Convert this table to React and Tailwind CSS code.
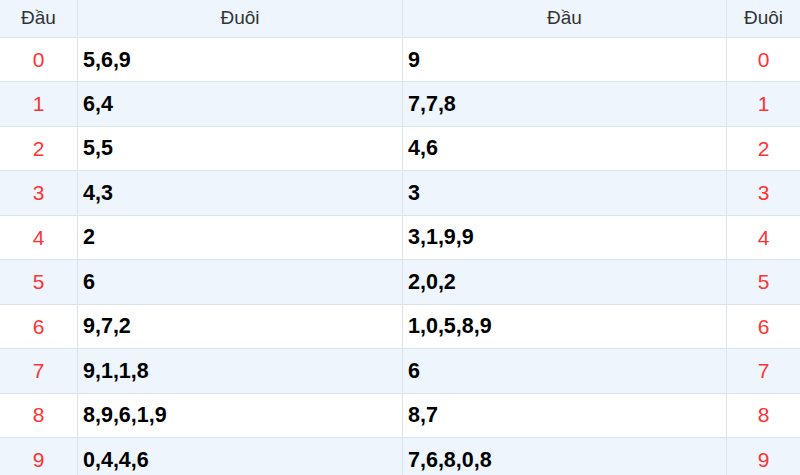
import React from "react";

const rows = [
  { n: 0, tail: "5,6,9", head: "9" },
  { n: 1, tail: "6,4", head: "7,7,8" },
  { n: 2, tail: "5,5", head: "4,6" },
  { n: 3, tail: "4,3", head: "3" },
  { n: 4, tail: "2", head: "3,1,9,9" },
  { n: 5, tail: "6", head: "2,0,2" },
  { n: 6, tail: "9,7,2", head: "1,0,5,8,9" },
  { n: 7, tail: "9,1,1,8", head: "6" },
  { n: 8, tail: "8,9,6,1,9", head: "8,7" },
  { n: 9, tail: "0,4,4,6", head: "7,6,8,0,8" },
];

export default function App() {
  return (
    <div
      className="w-[800px] h-[475px] overflow-hidden bg-white"
      style={{ fontFamily: '"Liberation Sans", Arial, sans-serif' }}
    >
      <div className="flex h-[38px] bg-[#eef5fd] border-b border-[#dde3ea] text-[19px] text-[#333]">
        <div className="w-[78px] border-r border-[#dde3ea] flex items-center justify-center">Đầu</div>
        <div className="w-[325px] border-r border-[#dde3ea] flex items-center justify-center">Đuôi</div>
        <div className="w-[324px] border-r border-[#dde3ea] flex items-center justify-center">Đầu</div>
        <div className="flex-1 flex items-center justify-center">Đuôi</div>
      </div>
      {rows.map((r) => (
        <div
          key={r.n}
          className={`flex h-[44.44px] border-b border-[#dde3ea] ${r.n % 2 ? "bg-[#eef5fd]" : "bg-white"}`}
        >
          <div className="w-[78px] border-r border-[#dde3ea] flex items-center justify-center text-[21px] text-[#ff3333]">
            {r.n}
          </div>
          <div className="w-[325px] border-r border-[#dde3ea] flex items-center pl-[5px] text-[21.5px] font-bold text-black">
            {r.tail}
          </div>
          <div className="w-[324px] border-r border-[#dde3ea] flex items-center pl-[5px] text-[21.5px] font-bold text-black">
            {r.head}
          </div>
          <div className="flex-1 flex items-center justify-center text-[21px] text-[#ff3333]">
            {r.n}
          </div>
        </div>
      ))}
    </div>
  );
}
